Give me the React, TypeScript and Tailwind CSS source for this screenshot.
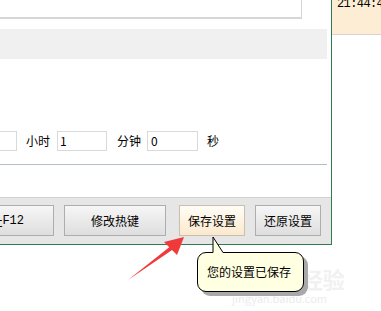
import React from "react";

const cjk = { fontFamily: '"Noto Sans CJK SC", "Liberation Sans", sans-serif' };

function Btn({ label, className = "", hot = false }: { label: React.ReactNode; className?: string; hot?: boolean }) {
  return (
    <div
      className={`flex h-[31px] shrink-0 items-center justify-center border text-[12px] text-black ${
        hot
          ? "border-[#c9bfae] bg-gradient-to-b from-[#fffdf7] to-[#fbe9cd]"
          : "border-[#adadad] bg-gradient-to-b from-[#f6f6f6] to-[#dedede]"
      } ${className}`}
      style={cjk}
    >
      {label}
    </div>
  );
}

export default function App() {
  return (
    <div className="relative flex h-[311px] w-[381px] overflow-hidden bg-white" style={cjk}>
      {/* window */}
      <div className="flex h-[245px] w-[332px] shrink-0 flex-col border-r border-b border-[#2f7c4f]">
        <div className="h-[19px] shrink-0">
          <div className="h-full w-[302px] border-r border-b-2 border-[#d6d6d6]" />
        </div>
        <div className="mt-[10px] h-[30px] w-[327px] shrink-0 bg-[#f0f0f0]" />
        <div className="mt-[72px] flex h-[20px] shrink-0 items-center text-[12px] text-black">
          <div className="ml-[-2px] h-[20px] w-[19px] border border-[#d9d9d9]" />
          <span className="ml-[9px] w-[31px]">小时</span>
          <div className="flex h-[20px] w-[50px] items-center border border-[#d9d9d9] pl-[2px]">1</div>
          <span className="ml-[10px] w-[30px]">分钟</span>
          <div className="flex h-[20px] w-[51px] items-center border border-[#d9d9d9] pl-[3px]">0</div>
          <span className="ml-[9px]">秒</span>
        </div>
        <div className="mt-[13px] h-px w-[327px] shrink-0 bg-[#b5bdc8]" />
        <div className="mt-[32px] flex flex-1 items-start border-t border-[#d2d2d2] bg-[#e6e6e6] pt-[7px]">
          <Btn
            className="ml-[-40px] w-[94px] justify-end pr-[29px]"
            label={
              <>
                址<span style={{ fontFamily: '"Liberation Mono", monospace' }}>F12</span>
              </>
            }
          />
          <Btn className="ml-[10px] w-[102px]" label="修改热键" />
          <Btn className="ml-[13px] w-[66px]" label="保存设置" hot />
          <Btn className="ml-[10px] w-[66px]" label="还原设置" />
        </div>
      </div>

      {/* right side panel */}
      <div className="w-[49px] shrink-0">
        <div className="h-[38px] border-b border-[#dcd2d2] bg-[#fdedd5] pl-[5px]">
          <div
            className="mt-[-3px] whitespace-nowrap text-[12px] leading-[14px] tracking-[-0.6px] text-black"
            style={{ fontFamily: '"Liberation Mono", monospace' }}
          >
            21:44:42
          </div>
        </div>
      </div>

      {/* watermark */}
      <div className="absolute left-[228px] top-[262px] text-[22px] font-bold text-[#f1f1f1]" style={cjk}>
        Bai du 经验
      </div>
      <div className="absolute left-[232px] top-[290px] text-[11px] text-[#ececec]">jingyan.baidu.com</div>

      {/* tooltip */}
      <div className="absolute left-[201px] top-[256px] h-[40px] w-[107px] rounded-[9px] bg-[#a9a9a9]" />
      <div className="absolute left-[197px] top-[252px] flex h-[40px] w-[107px] items-center rounded-[9px] border border-black bg-[#ffffe1] pl-[9px] text-[12px] text-black">
        您的设置已保存
      </div>
      <svg className="absolute left-[212px] top-[236px]" width="14" height="18" viewBox="0 0 14 18">
        <path d="M1 17 L1 1 L11 16.5" fill="#ffffe1" stroke="black" strokeWidth="1" />
        <rect x="1.5" y="16" width="9" height="2" fill="#ffffe1" />
      </svg>

      {/* red arrow */}
      <svg className="absolute left-[120px] top-[228px]" width="70" height="60" viewBox="0 0 70 60">
        <path d="M8 52 L52 17 L55 20 Z" fill="#f03a3a" />
        <path d="M64 9 L44 14 L57 27 Z" fill="#f03a3a" />
      </svg>
    </div>
  );
}
